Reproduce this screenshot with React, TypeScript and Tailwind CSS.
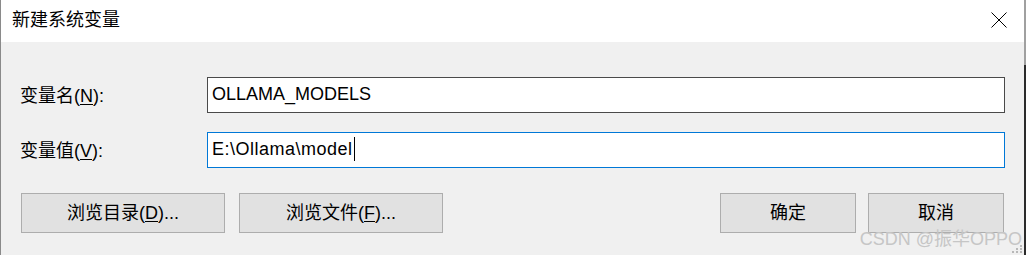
import React from 'react'

const FONT = { fontFamily: '"Liberation Sans", "Noto Sans CJK SC", sans-serif' }

function CloseIcon() {
  return (
    <svg width="16" height="16" viewBox="0 0 16 16" className="block">
      <path d="M0.5 0.5 L15.5 15.5 M15.5 0.5 L0.5 15.5" stroke="#000" strokeWidth="1" fill="none" />
    </svg>
  )
}

function Grip() {
  return (
    <svg width="12" height="8" viewBox="0 0 12 8" className="block">
      <rect x="10" y="0" width="2" height="2" fill="#b8b8b8" />
      <rect x="6" y="3" width="2" height="2" fill="#b8b8b8" />
      <rect x="10" y="3" width="2" height="2" fill="#b8b8b8" />
      <rect x="2" y="6" width="2" height="2" fill="#b8b8b8" />
      <rect x="6" y="6" width="2" height="2" fill="#b8b8b8" />
      <rect x="10" y="6" width="2" height="2" fill="#b8b8b8" />
    </svg>
  )
}

function Btn({ children, w }: { children: React.ReactNode; w: string }) {
  return (
    <button
      type="button"
      className={`${w} h-[40px] bg-[#e1e1e1] border border-[#adadad] text-[18px] text-black leading-none flex items-center justify-center`}
    >
      {children}
    </button>
  )
}

export default function App() {
  return (
    <div className="w-[1026px] h-[255px] flex overflow-hidden relative text-black" style={FONT}>
      <div className="w-[1px] bg-[#8a8a8a]" />
      <div className="flex-1 flex flex-col">
        <div className="h-[42px] bg-white flex items-center justify-between pl-[11px] pr-[17px] pb-[3px]">
          <span className="text-[18px] leading-none">新建系统变量</span>
          <CloseIcon />
        </div>
        <div className="flex-1 bg-[#f0f0f0] flex flex-col pt-[35px]">
          <div className="flex items-center pl-[19px] pr-[19px]">
            <label className="w-[187px] text-[18px] leading-none pt-[2px]">
              变量名(<span className="underline underline-offset-2">N</span>):
            </label>
            <div className="w-[798px] h-[36px] bg-white border border-[#4a4a4a] flex items-center pl-[4px] pb-[3px] text-[18px] leading-none">
              OLLAMA_MODELS
            </div>
          </div>
          <div className="flex items-center pl-[19px] pr-[19px] mt-[19px]">
            <label className="w-[187px] text-[18px] leading-none pt-[2px]">
              变量值(<span className="underline underline-offset-2">V</span>):
            </label>
            <div className="w-[798px] h-[36px] bg-white border border-[#0078d7] flex items-center pl-[4px] pb-[2px] text-[18px] leading-none tracking-[0.5px]">
              E:\Ollama\model
              <span className="w-[1px] h-[24px] bg-black ml-[1px]" />
            </div>
          </div>
          <div className="flex items-center pl-[20px] pr-[20px] mt-[25px]">
            <Btn w="w-[204px]">
              浏览目录(<span className="underline underline-offset-2">D</span>)...
            </Btn>
            <div className="ml-[14px]">
              <Btn w="w-[204px]">
                浏览文件(<span className="underline underline-offset-2">F</span>)...
              </Btn>
            </div>
            <div className="flex-1" />
            <Btn w="w-[136px]">确定</Btn>
            <div className="ml-[12px]">
              <Btn w="w-[136px]">取消</Btn>
            </div>
          </div>
        </div>
      </div>
      <div className="w-[2px] flex flex-col">
        <div className="h-[65px] bg-[#a0a0a0]" />
        <div className="flex-1 bg-[#2b2b2b]" />
      </div>
      <div className="absolute right-[4px] bottom-[7px] text-[18px] leading-none text-[#c6c6c6]">
        CSDN @振华OPPO
      </div>
      <div className="absolute right-[4px] bottom-[2px]">
        <Grip />
      </div>
    </div>
  )
}
